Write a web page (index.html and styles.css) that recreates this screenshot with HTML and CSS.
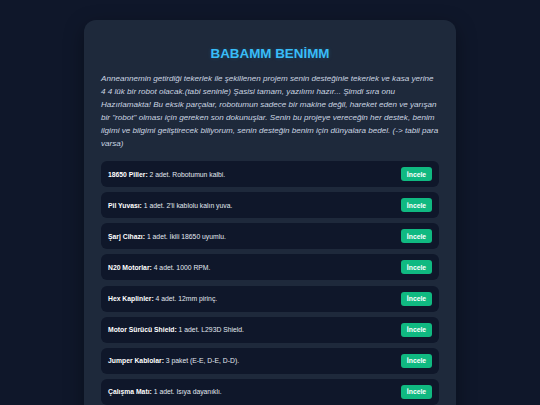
FILE: index.html
```html
<!DOCTYPE html>
<html lang="tr">
<head>
<meta charset="utf-8">
<title>BABAMM BENİMM</title>
<link rel="stylesheet" href="styles.css">
</head>
<body>
<main class="card">
  <h1 class="title">BABAMM BENİMM</h1>
  <p class="intro">Anneannemin getirdiği tekerlek ile şekillenen projem senin desteğinle tekerlek ve kasa yerine 4 4 lük bir robot olacak.(tabi seninle) Şasisi tamam, yazılımı hazır... Şimdi sıra onu Hazırlamakta! Bu eksik parçalar, robotumun sadece bir makine değil, hareket eden ve yarışan bir "robot" olması için gereken son dokunuşlar. Senin bu projeye vereceğin her destek, benim ilgimi ve bilgimi geliştirecek biliyorum, senin desteğin benim için dünyalara bedel. (-&gt; tabii para varsa)</p>
  <ul class="list">
    <li class="item"><span class="desc"><b>18650 Piller:</b> 2 adet. Robotumun kalbi.</span><a class="btn" href="#">İncele</a></li>
    <li class="item"><span class="desc"><b>Pil Yuvası:</b> 1 adet. 2'li kablolu kalın yuva.</span><a class="btn" href="#">İncele</a></li>
    <li class="item"><span class="desc"><b>Şarj Cihazı:</b> 1 adet. İkili 18650 uyumlu.</span><a class="btn" href="#">İncele</a></li>
    <li class="item"><span class="desc"><b>N20 Motorlar:</b> 4 adet. 1000 RPM.</span><a class="btn" href="#">İncele</a></li>
    <li class="item"><span class="desc"><b>Hex Kaplinler:</b> 4 adet. 12mm pirinç.</span><a class="btn" href="#">İncele</a></li>
    <li class="item"><span class="desc"><b>Motor Sürücü Shield:</b> 1 adet. L293D Shield.</span><a class="btn" href="#">İncele</a></li>
    <li class="item"><span class="desc"><b>Jumper Kablolar:</b> 3 paket (E-E, D-E, D-D).</span><a class="btn" href="#">İncele</a></li>
    <li class="item"><span class="desc"><b>Çalışma Matı:</b> 1 adet. Isıya dayanıklı.</span><a class="btn" href="#">İncele</a></li>
  </ul>
</main>
</body>
</html>
```

FILE: styles.css
```css
html, body {
  margin: 0;
  padding: 0;
  background: #0f172a;
  font-family: "Liberation Sans", Arial, sans-serif;
}
body {
  padding-top: 20px;
}
.card {
  width: 372px;
  box-sizing: border-box;
  margin: 0 auto;
  background: #1e293b;
  border-radius: 12px;
  padding: 25px 17px 20px;
  box-shadow: 0 6px 20px rgba(0, 0, 0, 0.35);
}
.title {
  margin: 0;
  text-align: center;
  color: #38bdf8;
  font-size: 13.4px;
  line-height: 17px;
  font-weight: 700;
  text-shadow: 0 0 4px rgba(56, 189, 248, 0.2);
}
.intro {
  margin: 10px 0 0;
  color: #cbd5e1;
  font-size: 8.1px;
  line-height: 13px;
  font-style: italic;
}
.list {
  list-style: none;
  margin: 11px 0 0;
  padding: 0;
  display: flex;
  flex-direction: column;
  gap: 5.15px;
}
.item {
  display: flex;
  align-items: center;
  justify-content: space-between;
  background: #0f172a;
  border-radius: 6px;
  padding: 6px 7px;
}
.desc {
  color: #e2e8f0;
  font-size: 6.8px;
}
.desc b {
  color: #ffffff;
}
.btn {
  display: flex;
  align-items: center;
  justify-content: center;
  width: 31px;
  height: 14px;
  background: #10b981;
  color: #fff;
  border-radius: 3px;
  font-size: 6.8px;
  font-weight: 700;
  text-decoration: none;
}
```
